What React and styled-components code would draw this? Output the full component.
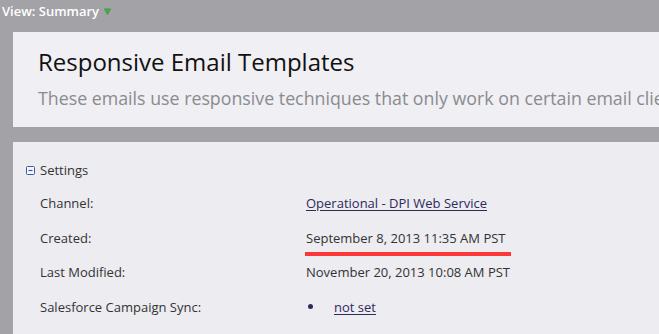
import React from 'react'
import styled, { createGlobalStyle } from 'styled-components'

const Global = createGlobalStyle`
    html, body {
        margin: 0;
        padding: 0;
        background: #a3a2a7;
        font-family: "Open Sans", "Noto Sans", sans-serif;
        overflow: hidden;
    }
`

const Page = styled.div`
    width: 659px;
    height: 334px;
    overflow: hidden;
    background: #a3a2a7;
`

const ViewBar = styled.div`
    display: flex;
    align-items: center;
    gap: 5px;
    height: 24px;
    padding: 0 0 0 2px;
    margin-top: -1px;
    color: #ffffff;
    font-size: 13px;
    font-weight: 600;
`

const Caret = styled.svg`
    width: 7px;
    height: 7px;
`

const Panel = styled.div`
    margin-left: 13px;
    margin-top: ${p => p.$top};
    background: ${p => p.$light ? '#efeff4' : '#ececf1'};
    padding: ${p => p.$pad};
    white-space: nowrap;
    overflow: hidden;
`

const Title = styled.h1`
    margin: 0;
    font-size: 24px;
    font-weight: 400;
    color: #111;
    line-height: 32px;
`

const Subtitle = styled.p`
    margin: 9px 0 0;
    font-size: 17.8px;
    color: #8b8b8e;
    line-height: 22px;
`

const Section = styled.div`
    display: flex;
    align-items: center;
    gap: 5px;
    font-size: 13px;
    color: #333;
    height: 20px;
`

const Grid = styled.div`
    display: grid;
    grid-template-columns: 266px auto;
    grid-auto-rows: 34.5px;
    align-items: center;
    margin-top: 6px;
    padding-left: 14px;
    font-size: 13px;
    color: #333;
`

const Value = styled.span`
    justify-self: start;
    position: relative;
    color: #333;
`

const Link = styled.a`
    color: #2e2a5a;
    text-decoration: underline;
    text-underline-offset: 2px;
`

const Mark = styled.span`
    position: absolute;
    left: -1px;
    right: -5px;
    bottom: -9px;
    height: 4px;
    background: #fd3737;
`

const Bullet = styled.span`
    display: flex;
    align-items: center;
    gap: 21px;
    &::before {
        content: '';
        width: 5px;
        height: 5px;
        border-radius: 50%;
        background: #2e2a5a;
        margin-left: 2px;
    }
`

export default function App() {
    return (
        <Page>
            <Global />
            <ViewBar>
                View: Summary
                <Caret viewBox="0 0 8 8">
                    <path d="M0.5 1 H7.5 L4 7.5 Z" fill="#3fb33a" stroke="#2a8a2a" strokeWidth="0.6" />
                </Caret>
            </ViewBar>
            <Panel $light $top="9px" $pad="14px 0 18px 25px">
                <Title>Responsive Email Templates</Title>
                <Subtitle>These emails use responsive techniques that only work on certain email clients.</Subtitle>
            </Panel>
            <Panel $top="15px" $pad="18px 0 40px 13px">
                <Section>
                    <svg width="9" height="9" viewBox="0 0 9 9">
                        <rect x="0.5" y="0.5" width="8" height="8" rx="1" fill="#f4f6fb" stroke="#3e5a9a" />
                        <path d="M2.5 4.5 H6.5" stroke="#3e5a9a" strokeWidth="1.2" />
                    </svg>
                    Settings
                </Section>
                <Grid>
                    <span>Channel:</span>
                    <Value><Link href="#">Operational - DPI Web Service</Link></Value>
                    <span>Created:</span>
                    <Value>September 8, 2013 11:35 AM PST<Mark /></Value>
                    <span>Last Modified:</span>
                    <Value>November 20, 2013 10:08 AM PST</Value>
                    <span>Salesforce Campaign Sync:</span>
                    <Value><Bullet><Link href="#">not set</Link></Bullet></Value>
                </Grid>
            </Panel>
        </Page>
    )
}
